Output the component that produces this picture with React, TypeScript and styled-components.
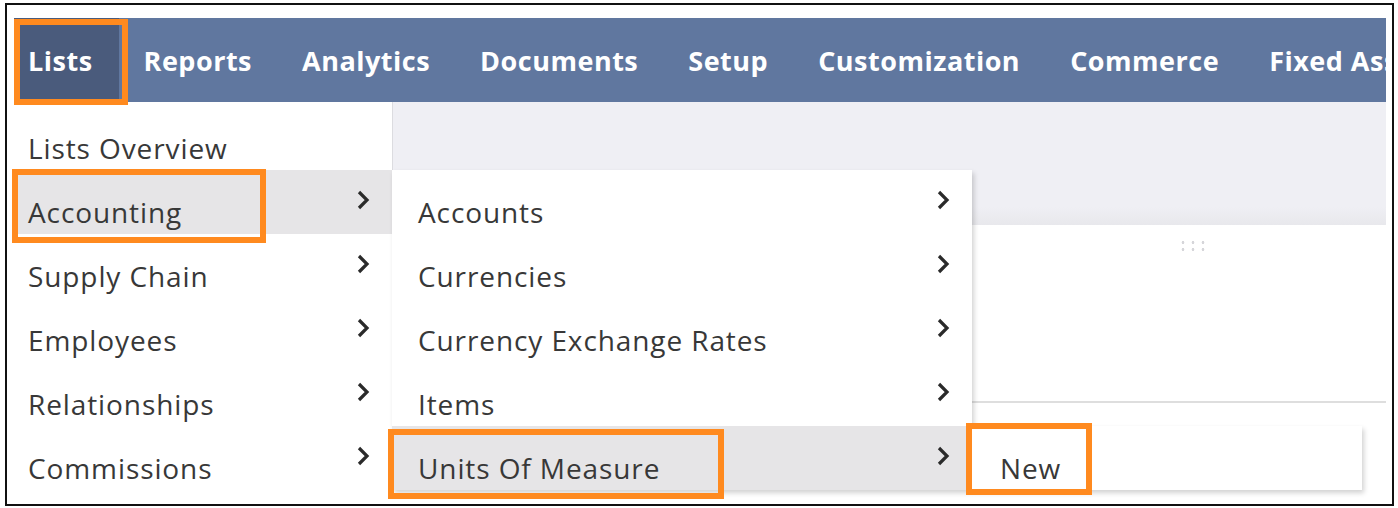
import React from "react";
import styled, { createGlobalStyle } from "styled-components";

const Global = createGlobalStyle`
  body { margin: 0; background: #fff; font-family: "Open Sans", "Liberation Sans", sans-serif; }
`;

const Frame = styled.div`
  position: relative;
  margin: 3px 4px 0 5px;
  width: 1385px;
  height: 499px;
  border: 2px solid #111;
  background: #fff;
  overflow: hidden;
`;

const Page = styled.div`
  position: absolute;
  left: 7px;
  top: 13px;
  width: 1372px;
  height: 480px;
`;

const NavBar = styled.nav`
  display: flex;
  height: 84px;
  background: #60779f;
  overflow: hidden;
  white-space: nowrap;
`;

const NavItem = styled.div<{ $active?: boolean }>`
  position: relative;
  display: flex;
  align-items: center;
  padding: 0 ${(p) => (p.$active ? "26px" : "25px")} 0 ${(p) => (p.$active ? "14px" : "25px")};
  background: ${(p) => (p.$active ? "#4a5b7c" : "transparent")};
  color: #fff;
  font-weight: 700;
  font-size: 27px;
  letter-spacing: 0.5px;
`;

const Body = styled.div`
  display: grid;
  grid-template-columns: 378px 1fr;
`;

const Blank = styled.div``;

const Band = styled.div`
  height: 123px;
  background: linear-gradient(#efeff4 85%, #e8e8ec);
  border-left: 1px solid #dcdce0;
`;

const Handle = styled.div`
  margin: 14px 0 0 786px;
  width: 28px;
  height: 12px;
  background-image: radial-gradient(circle, #d6d6da 1.2px, transparent 1.6px);
  background-size: 10px 7px;
`;

const Rule = styled.div`
  margin: 150px 0 0 580px;
  height: 2px;
  background: #dedede;
`;

const Menu = styled.div<{ $left: number; $top: number; $width: number }>`
  position: absolute;
  left: ${(p) => p.$left}px;
  top: ${(p) => p.$top}px;
  width: ${(p) => p.$width}px;
  background: #fff;
  box-shadow: 2px 3px 5px rgba(0, 0, 0, 0.18);
  display: flex;
  flex-direction: column;
`;

const Row = styled.div<{ $hl?: boolean; $pad?: number }>`
  position: relative;
  height: 64px;
  display: flex;
  align-items: flex-end;
  justify-content: space-between;
  padding: 0 22px 2px ${(p) => p.$pad ?? 14}px;
  background: ${(p) => (p.$hl ? "#e6e5e7" : "transparent")};
  color: #383838;
  font-size: 28px;
  letter-spacing: 0.9px;
  box-sizing: border-box;
`;

const Label = styled.span`
  line-height: 40px;
`;

const Chevron = styled.svg`
  align-self: flex-start;
  margin-top: 20px;
  width: 14px;
  height: 20px;
`;

const Mark = styled.div<{ $l: number; $t: number; $w: number; $h: number }>`
  position: absolute;
  left: ${(p) => p.$l}px;
  top: ${(p) => p.$t}px;
  width: ${(p) => p.$w}px;
  height: ${(p) => p.$h}px;
  border: 6px solid #ff8a1f;
  box-sizing: border-box;
  pointer-events: none;
`;

const Chev = () => (
  <Chevron viewBox="0 0 14 20">
    <path d="M3 2 L11 10 L3 18" fill="none" stroke="#2a2a2a" strokeWidth="3.2" />
  </Chevron>
);

const Item = ({ label, arrow = true, hl, pad }: { label: string; arrow?: boolean; hl?: boolean; pad?: number }) => (
  <Row $hl={hl} $pad={pad}>
    <Label>{label}</Label>
    {arrow && <Chev />}
  </Row>
);

export default function App() {
  const nav = ["Reports", "Analytics", "Documents", "Setup", "Customization", "Commerce", "Fixed Assets"];
  return (
    <>
      <Global />
      <Frame>
        <Page>
          <NavBar>
            <NavItem $active>Lists</NavItem>
            {nav.map((n) => (
              <NavItem key={n}>{n}</NavItem>
            ))}
          </NavBar>
          <Body>
            <Blank />
            <div>
              <Band />
              <Handle />
              <Rule />
            </div>
          </Body>

          <Menu $left={0} $top={88} $width={378} style={{ boxShadow: "none" }}>
            <Item label="Lists Overview" arrow={false} />
            <Item label="Accounting" hl />
            <Item label="Supply Chain" />
            <Item label="Employees" />
            <Item label="Relationships" />
            <Item label="Commissions" />
          </Menu>

          <Menu $left={378} $top={152} $width={580}>
            <Item label="Accounts" pad={26} />
            <Item label="Currencies" pad={26} />
            <Item label="Currency Exchange Rates" pad={26} />
            <Item label="Items" pad={26} />
            <Item label="Units Of Measure" pad={26} hl />
          </Menu>

          <Menu $left={958} $top={408} $width={390}>
            <Item label="New" arrow={false} pad={28} />
          </Menu>

          <Mark $l={0} $t={1} $w={114} $h={86} />
          <Mark $l={-2} $t={151} $w={254} $h={74} />
          <Mark $l={374} $t={411} $w={336} $h={70} />
          <Mark $l={952} $t={405} $w={126} $h={72} />
        </Page>
      </Frame>
    </>
  );
}
